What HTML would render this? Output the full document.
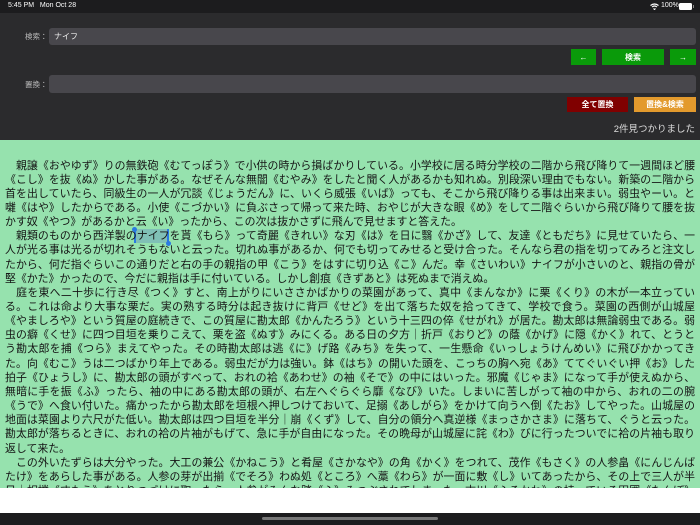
<!DOCTYPE html>
<html><head><meta charset="utf-8"><style>
*{margin:0;padding:0;box-sizing:border-box}
body{width:700px;height:525px;overflow:hidden;background:#fff;font-family:"Liberation Sans","Noto Sans CJK JP",sans-serif;position:relative}
.abs{position:absolute}
#status{left:0;top:0;width:700px;height:13px;background:#1c1c1e;color:#fff;font-size:7px}
#panel{left:0;top:13px;width:700px;height:127px;background:#2b2b2d}
.field{background:#48474c;border-radius:3px}
.lbl{color:#bbb;font-size:7.5px}
.btn{color:#fff;font-size:8px;display:flex;align-items:center;justify-content:center;font-weight:bold}
#text{left:0;top:140px;width:700px;height:348px;background:#96e2ae;overflow:hidden}
.ln{position:absolute;left:5px;width:690px;height:14.15px;font-size:10.9px;line-height:14.15px;color:#151515;white-space:nowrap;text-align:justify;text-align-last:justify}
.ln.l{text-align-last:left}
</style></head><body>
<div id="status" class="abs"><span class="abs" style="left:8px;top:2px">5:45 PM&nbsp;&nbsp; Mon Oct 28</span>
<span class="abs" style="left:661px;top:2px">100%</span>
<svg class="abs" style="left:650px;top:3px" width="9" height="7" viewBox="0 0 9 7"><path d="M0.5 2.5Q4.5 -0.5 8.5 2.5M2 4Q4.5 2 7 4M3.5 5.5L4.5 6.5L5.5 5.5" stroke="#fff" stroke-width="1.1" fill="none"/></svg>
<div class="abs" style="left:679px;top:3px;width:13px;height:7px;background:#fff;border-radius:1.5px"></div>
<div class="abs" style="left:692.5px;top:5px;width:1.5px;height:3px;background:#888"></div>
</div>
<div id="panel" class="abs"></div>
<div class="abs lbl" style="left:25px;top:31px">検索：</div>
<div class="abs field" style="left:49px;top:28px;width:647px;height:17px"></div>
<div class="abs" style="left:54px;top:31px;color:#eee;font-size:8px">ナイフ</div>
<div class="abs btn" style="left:571px;top:49px;width:25px;height:16px;background:#0a9a0a">←</div>
<div class="abs btn" style="left:602px;top:49px;width:62px;height:16px;background:#0a9a0a">検索</div>
<div class="abs btn" style="left:670px;top:49px;width:26px;height:16px;background:#0a9a0a">→</div>
<div class="abs lbl" style="left:25px;top:79px">置換：</div>
<div class="abs field" style="left:49px;top:75px;width:647px;height:18px"></div>
<div class="abs btn" style="left:567px;top:97px;width:61px;height:15px;background:#800000">全て置換</div>
<div class="abs btn" style="left:634px;top:97px;width:62px;height:15px;background:#e39a2d">置換&amp;検索</div>
<div class="abs" style="right:5px;top:121px;color:#ddd;font-size:9.5px">2件見つかりました</div>
<div id="text" class="abs">
<div class="abs" style="left:134px;top:89px;width:34px;height:14px;background:#7ab8b8;opacity:.8"></div>
<div class="abs" style="left:134px;top:89px;width:1.5px;height:14px;background:#2a7ae2"></div>
<div class="abs" style="left:132px;top:87px;width:5px;height:5px;border-radius:50%;background:#2a7ae2"></div>
<div class="abs" style="left:167px;top:89px;width:1.5px;height:14px;background:#2a7ae2"></div>
<div class="abs" style="left:165.5px;top:101px;width:5px;height:5px;border-radius:50%;background:#2a7ae2"></div>
<div class="ln" style="top:18.5px">　親譲《おやゆず》りの無鉄砲《むてっぽう》で小供の時から損ばかりしている。小学校に居る時分学校の二階から飛び降りて一週間ほど腰</div>
<div class="ln" style="top:32.6px">《こし》を抜《ぬ》かした事がある。なぜそんな無闇《むやみ》をしたと聞く人があるかも知れぬ。別段深い理由でもない。新築の二階から</div>
<div class="ln" style="top:46.8px">首を出していたら、同級生の一人が冗談《じょうだん》に、いくら威張《いば》っても、そこから飛び降りる事は出来まい。弱虫やーい。と</div>
<div class="ln" style="top:60.9px">囃《はや》したからである。小使《こづかい》に負ぶさって帰って来た時、おやじが大きな眼《め》をして二階ぐらいから飛び降りて腰を抜</div>
<div class="ln l" style="top:75.1px">かす奴《やつ》があるかと云《い》ったから、この次は抜かさずに飛んで見せますと答えた。</div>
<div class="ln" style="top:89.2px">　親類のものから西洋製のナイフを貰《もら》って奇麗《きれい》な刃《は》を日に翳《かざ》して、友達《ともだち》に見せていたら、一</div>
<div class="ln" style="top:103.4px">人が光る事は光るが切れそうもないと云った。切れぬ事があるか、何でも切ってみせると受け合った。そんなら君の指を切ってみろと注文し</div>
<div class="ln" style="top:117.5px">たから、何だ指ぐらいこの通りだと右の手の親指の甲《こう》をはすに切り込《こ》んだ。幸《さいわい》ナイフが小さいのと、親指の骨が</div>
<div class="ln l" style="top:131.7px">堅《かた》かったので、今だに親指は手に付いている。しかし創痕《きずあと》は死ぬまで消えぬ。</div>
<div class="ln" style="top:145.8px">　庭を東へ二十歩に行き尽《つく》すと、南上がりにいささかばかりの菜園があって、真中《まんなか》に栗《くり》の木が一本立ってい</div>
<div class="ln" style="top:160px">る。これは命より大事な栗だ。実の熟する時分は起き抜けに背戸《せど》を出て落ちた奴を拾ってきて、学校で食う。菜園の西側が山城屋</div>
<div class="ln" style="top:174.1px">《やましろや》という質屋の庭続きで、この質屋に勘太郎《かんたろう》という十三四の倅《せがれ》が居た。勘太郎は無論弱虫である。弱</div>
<div class="ln" style="top:188.3px">虫の癖《くせ》に四つ目垣を乗りこえて、栗を盗《ぬす》みにくる。ある日の夕方｜折戸《おりど》の蔭《かげ》に隠《かく》れて、とうと</div>
<div class="ln" style="top:202.4px">う勘太郎を捕《つら》まえてやった。その時勘太郎は逃《に》げ路《みち》を失って、一生懸命《いっしょうけんめい》に飛びかかってき</div>
<div class="ln" style="top:216.6px">た。向《むこ》うは二つばかり年上である。弱虫だが力は強い。鉢《はち》の開いた頭を、こっちの胸へ宛《あ》ててぐいぐい押《お》した</div>
<div class="ln" style="top:230.7px">拍子《ひょうし》に、勘太郎の頭がすべって、おれの袷《あわせ》の袖《そで》の中にはいった。邪魔《じゃま》になって手が使えぬから、</div>
<div class="ln" style="top:244.9px">無暗に手を振《ふ》ったら、袖の中にある勘太郎の頭が、右左へぐらぐら靡《なび》いた。しまいに苦しがって袖の中から、おれの二の腕</div>
<div class="ln" style="top:259px">《うで》へ食い付いた。痛かったから勘太郎を垣根へ押しつけておいて、足搦《あしがら》をかけて向うへ倒《たお》してやった。山城屋の</div>
<div class="ln" style="top:273.2px">地面は菜園より六尺がた低い。勘太郎は四つ目垣を半分｜崩《くず》して、自分の領分へ真逆様《まっさかさま》に落ちて、ぐうと云った。</div>
<div class="ln" style="top:287.3px">勘太郎が落ちるときに、おれの袷の片袖がもげて、急に手が自由になった。その晩母が山城屋に詫《わ》びに行ったついでに袷の片袖も取り</div>
<div class="ln l" style="top:301.5px">返して来た。</div>
<div class="ln" style="top:315.6px">　この外いたずらは大分やった。大工の兼公《かねこう》と肴屋《さかなや》の角《かく》をつれて、茂作《もさく》の人参畠《にんじんば</div>
<div class="ln" style="top:329.8px">たけ》をあらした事がある。人参の芽が出揃《でそろ》わぬ処《ところ》へ藁《わら》が一面に敷《し》いてあったから、その上で三人が半</div>
<div class="ln" style="top:343.9px">日｜相撲《すもう》をとりつづけに取ったら、人参がみんな踏《ふ》みつぶされてしまった。古川《ふるかわ》の持っている田圃《たんぼ》</div>
</div>
<div class="abs" style="left:0;top:513px;width:700px;height:12px;background:#1c1c1e"></div>
<div class="abs" style="left:262px;top:517px;width:176px;height:3px;border-radius:2px;background:#777"></div>
</body></html>
